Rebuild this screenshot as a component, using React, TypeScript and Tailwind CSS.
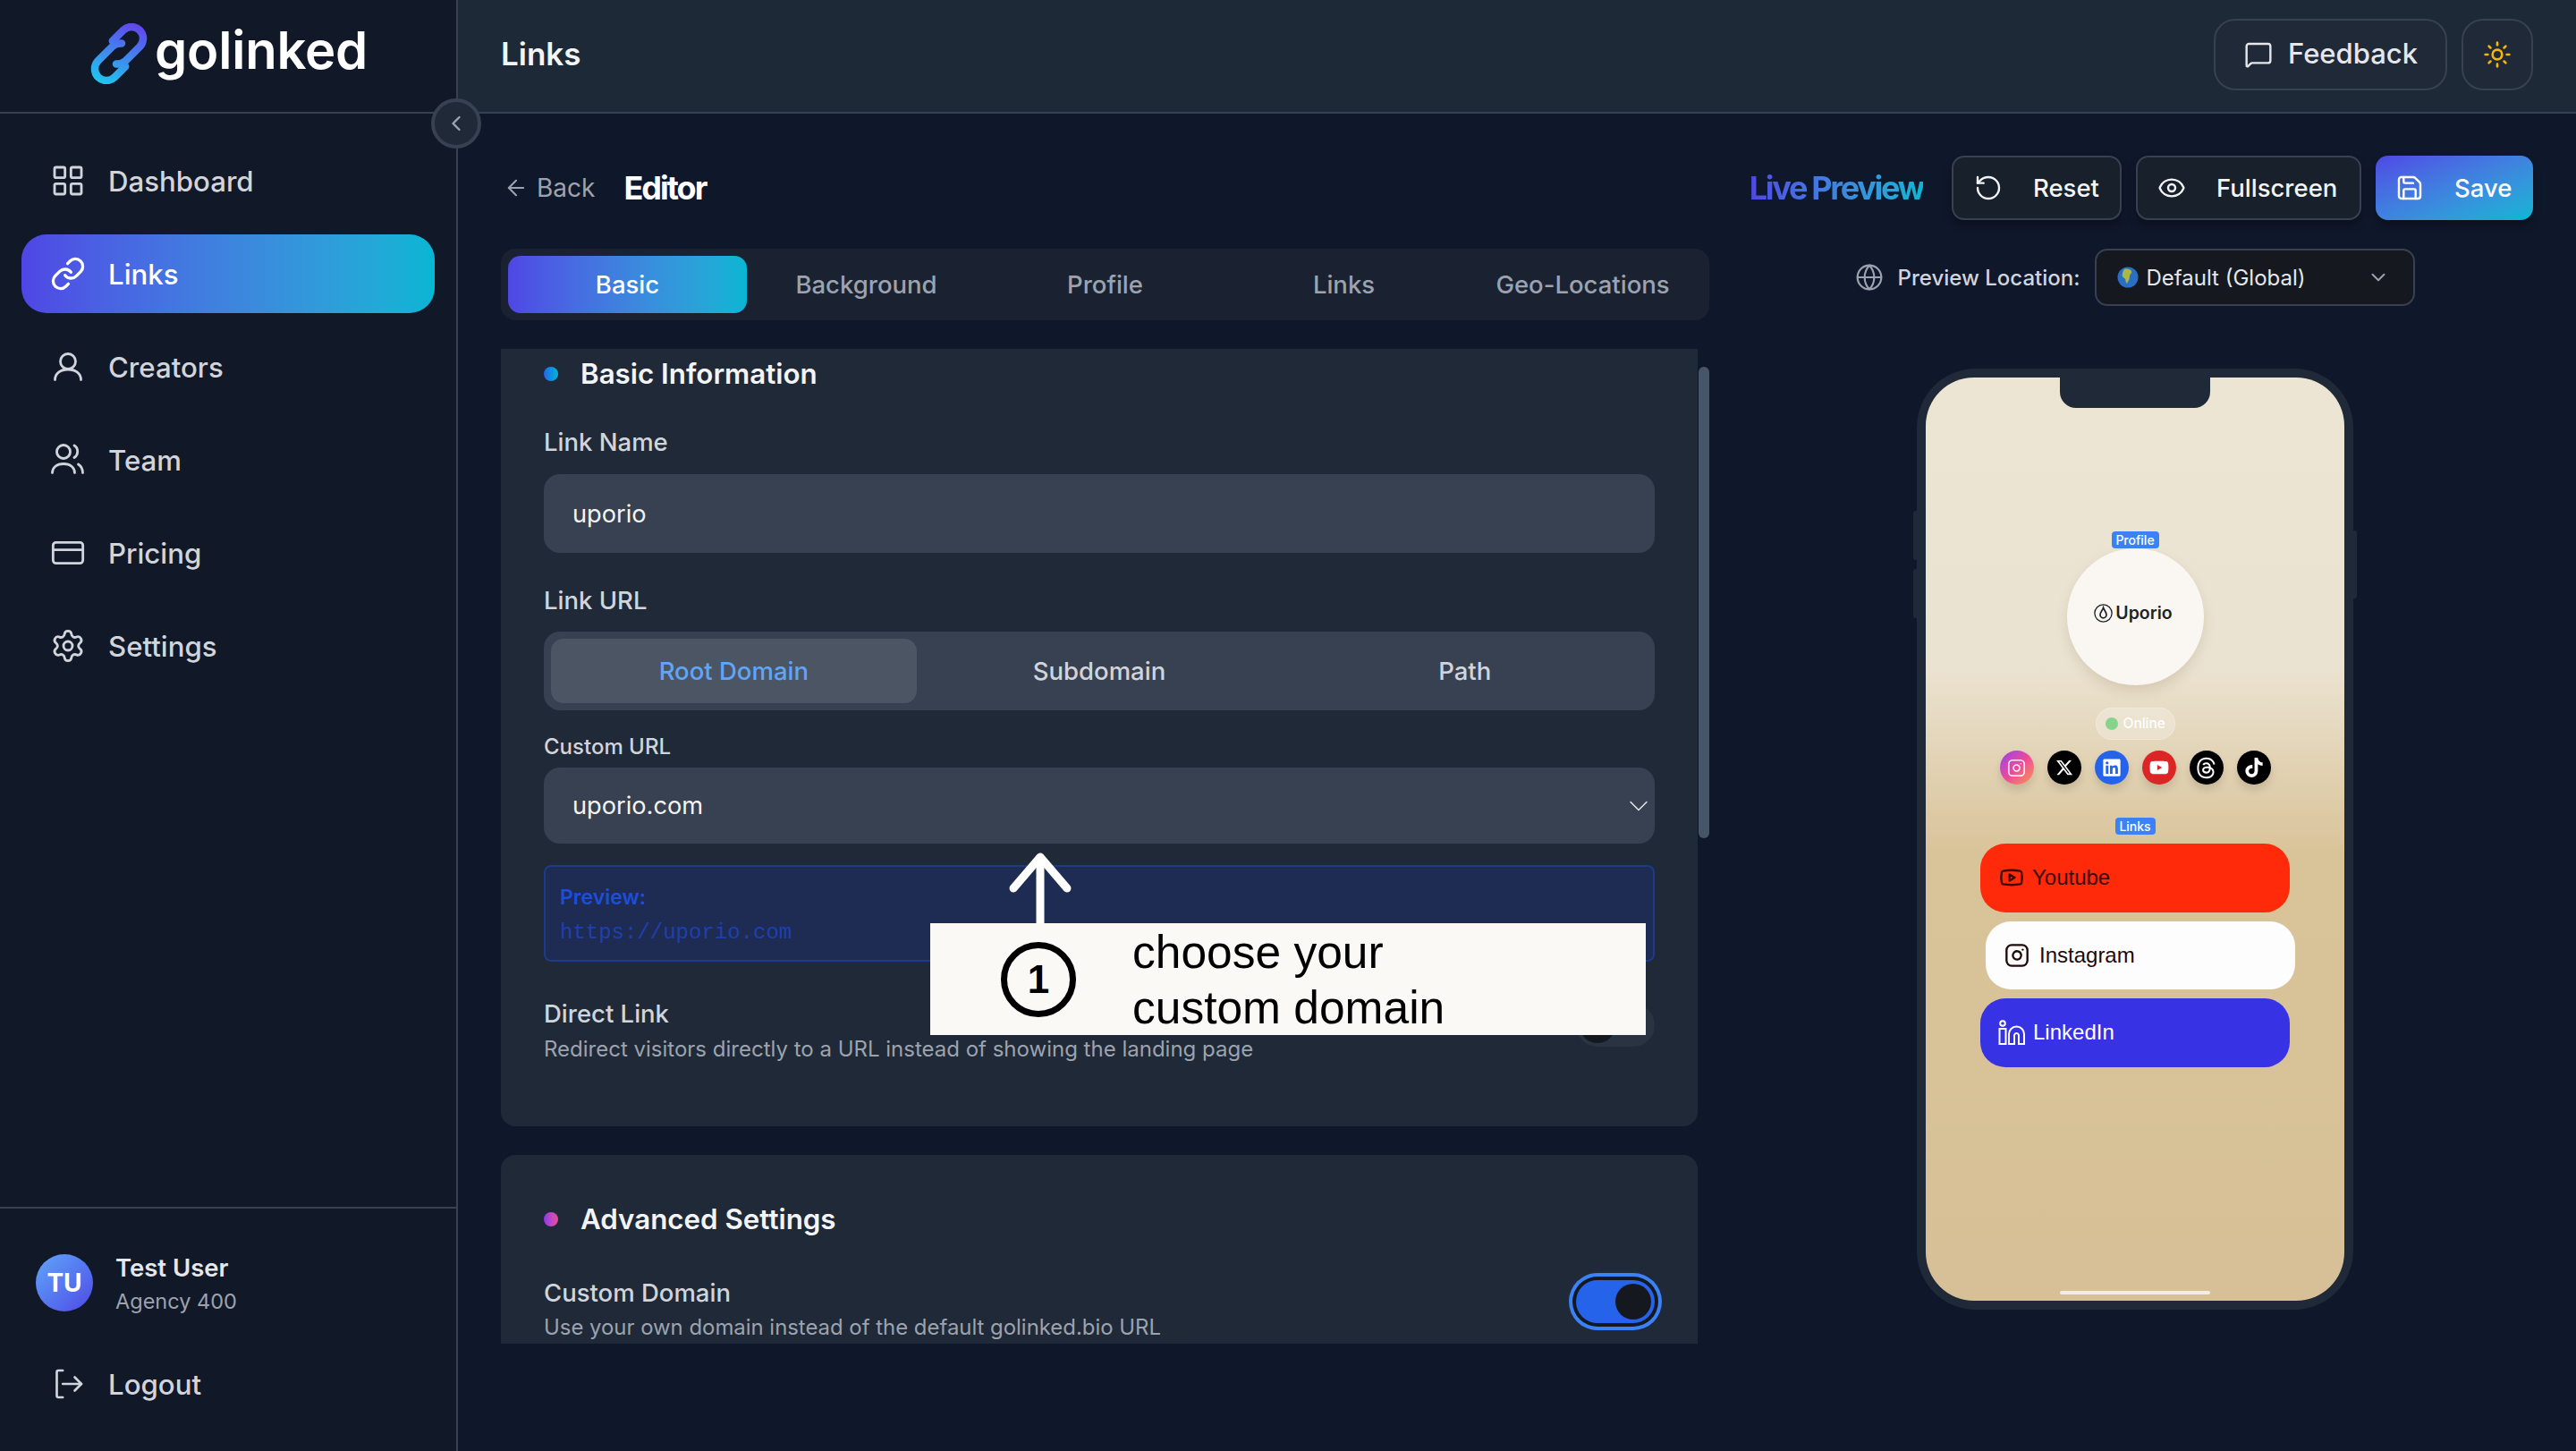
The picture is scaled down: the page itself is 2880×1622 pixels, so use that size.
import React from "react";
import { LayoutGrid, Link as LinkIcon, CreditCard, Settings, ChevronLeft, MessageSquare, Sun, ArrowLeft, RotateCcw, Eye, Save, Globe, ChevronDown, Instagram, Youtube } from "lucide-react";
import { FaXTwitter, FaLinkedin, FaYoutube, FaThreads, FaTiktok } from "react-icons/fa6";

function Logo() {
  return (
    <svg width="64" height="68" viewBox="0 0 64 68" fill="none" strokeWidth="8.5" strokeLinecap="round">
      <defs>
        <linearGradient id="lg" gradientUnits="userSpaceOnUse" x1="44" y1="0" x2="18" y2="68">
          <stop offset="0" stopColor="#6048ee" />
          <stop offset="1" stopColor="#22c4ee" />
        </linearGradient>
      </defs>
      <path stroke="url(#lg)" d="M24.8 19.800 36.800 7.800A13 13 0 0 1 55.200 26.200L39.200 42.200A13 13 0 0 1 29 45.500" />
      <path stroke="url(#lg)" d="M39.200 48.200 27.200 60.200A13 13 0 0 1 8.800 41.800L24.800 25.800A13 13 0 0 1 35 22.500" />
    </svg>
  );
}

function LogoutIcon() {
  return (
    <svg width="40" height="40" viewBox="0 0 24 24" fill="none" stroke="currentColor" strokeWidth="1.6" strokeLinecap="round" strokeLinejoin="round">
      <path d="M8.5 3H5.5a1 1 0 0 0-1 1v16a1 1 0 0 0 1 1h3" />
      <path d="M8.5 12H21" />
      <path d="M16.5 7.5 21 12l-4.5 4.5" />
    </svg>
  );
}

function CreatorIcon() {
  return (
    <svg width="40" height="40" viewBox="0 0 40 40" fill="none" stroke="currentColor" strokeWidth="2.8" strokeLinecap="round">
      <circle cx="20" cy="14" r="8.5" />
      <path d="M5.5 34.5c0-7 6-11.5 14.5-11.5s14.500 4.500 14.500 11.500" />
    </svg>
  );
}

function TeamIcon() {
  return (
    <svg width="40" height="40" viewBox="0 0 40 40" fill="none" stroke="currentColor" strokeWidth="2.8" strokeLinecap="round">
      <circle cx="15" cy="11" r="7.500" />
      <path d="M2.500 34.500c0-6 5-10 12.500-10s12.500 4 12.500 10" />
      <path d="M27 4a8 8 0 0 1 0 13.500" />
      <path d="M31.500 25c3 2 5 5.500 5 9.500" />
    </svg>
  );
}

function NavItem({ icon, label, active }: { icon: React.ReactNode; label: string; active?: boolean }) {
  return (
    <div className={active
      ? "flex h-[88px] items-center gap-[25px] rounded-[28px] bg-linear-to-r from-[#4f46e5] to-[#06b6d4] pl-[32px] text-[31.200px] font-medium text-white"
      : "flex h-[88px] items-center gap-[25px] rounded-[28px] pl-[32px] text-[31.200px] font-medium text-[#d1d5db]"}>
      {icon}
      <span className="pt-[2px]">{label}</span>
    </div>
  );
}

function Sidebar() {
  return (
    <aside className="flex h-full w-[512px] shrink-0 flex-col border-r-2 border-[#374151] bg-[#111827]">
      <div className="flex h-[127px] shrink-0 items-center border-b-2 border-[#374151] pb-[6px] pl-[101px]">
        <Logo />
        <span className="mb-[7px] ml-[8px] text-[58px] font-semibold leading-none tracking-[-0.2px] text-white">golinked</span>
      </div>
      <nav className="flex flex-1 flex-col gap-[16px] px-[24px] pt-[31px]">
        <NavItem icon={<LayoutGrid size={40} strokeWidth={1.7} />} label="Dashboard" />
        <NavItem active icon={<LinkIcon size={40} strokeWidth={2} />} label="Links" />
        <NavItem icon={<CreatorIcon />} label="Creators" />
        <NavItem icon={<TeamIcon />} label="Team" />
        <NavItem icon={<CreditCard size={40} strokeWidth={1.7} />} label="Pricing" />
        <NavItem icon={<Settings size={40} strokeWidth={1.7} />} label="Settings" />
      </nav>
      <div className="border-t-2 border-[#374151] pt-[51px] pb-[31px]">
        <div className="flex h-[64px] items-center gap-[25px] pl-[40px]">
          <div className="flex h-[64px] w-[64px] items-center justify-center rounded-full bg-linear-to-br from-[#60a5fa] to-[#4f46e5] text-[28px] font-bold text-white">TU</div>
          <div className="flex h-[64px] flex-col justify-center pt-[4px]">
            <span className="text-[27.500px] font-semibold leading-[37px] text-[#e5e7eb]">Test User</span>
            <span className="text-[23.500px] leading-[37px] text-[#9ca3af]">Agency 400</span>
          </div>
        </div>
        <div className="mt-[37px] px-[24px]">
          <NavItem icon={<LogoutIcon />} label="Logout" />
        </div>
      </div>
    </aside>
  );
}

function TopBar() {
  return (
    <header className="flex h-[127px] shrink-0 items-center justify-between border-b-2 border-[#374151] bg-[#1e2938] pl-[48px] pr-[48px] pb-[4px]">
      <h1 className="text-[35px] font-semibold text-[#f3f4f6]">Links</h1>
      <div className="flex items-center gap-[16px]">
        <button className="flex h-[80px] w-[261px] items-center gap-[17px] rounded-[24px] border-2 border-[#374151] bg-[#1f2937] pl-[32px] text-[31px] font-medium text-[#e5e7eb]">
          <MessageSquare size={32} strokeWidth={1.8} />
          <span>Feedback</span>
        </button>
        <button className="flex h-[80px] w-[80px] items-center justify-center rounded-[24px] border-2 border-[#374151] bg-[#1f2937] text-[#f5b50a]">
          <Sun size={32} strokeWidth={2} />
        </button>
      </div>
    </header>
  );
}

function Toggle({ on, className }: { on?: boolean; className: string }) {
  return (
    <div className={className}>
      {on ? (
        <div className="flex h-[48px] w-[88px] items-center justify-end rounded-full bg-[#2563eb] pr-[4px] ring-4 ring-[#3b82f6] ring-offset-4 ring-offset-[#15191f]">
          <div className="h-[40px] w-[40px] rounded-full bg-[#15191f]" />
        </div>
      ) : (
        <div className="flex h-[48px] w-[88px] items-center rounded-full bg-[#293341] pl-[4px]">
          <div className="h-[40px] w-[40px] rounded-full bg-[#15191f]" />
        </div>
      )}
    </div>
  );
}

function Editor() {
  const tabs = ["Background", "Profile", "Links", "Geo-Locations"];
  return (
    <div className="flex w-[1351px] shrink-0 flex-col">
      <div className="flex h-[72px] items-center">
        <div className="flex items-center gap-[9px] pl-[3px] text-[#9ca3af]">
          <ArrowLeft size={28} strokeWidth={1.8} />
          <span className="text-[28px]">Back</span>
        </div>
        <h2 className="ml-[32px] text-[36px] font-bold tracking-[-2px] text-white">Editor</h2>
      </div>
      <div className="mt-[32px] flex h-[80px] items-center rounded-[16px] bg-[#1a2232] p-[8px] text-[27.500px] font-medium text-[#9ca3af]">
        <div className="flex h-[64px] flex-1 items-center justify-center rounded-[14px] bg-linear-to-r from-[#4f46e5] to-[#06b6d4] pt-[1px] text-white">Basic</div>
        {tabs.map((t) => (
          <div key={t} className="flex h-[64px] flex-1 items-center justify-center pt-[1px]">{t}</div>
        ))}
      </div>
      <div className="relative mt-[32px] h-[1112px] overflow-hidden pr-[13px]">
        <div className="absolute right-0 top-[20px] h-[527px] w-[12px] rounded-full bg-[#475569]" />
        <section className="h-[869px] rounded-b-[16px] bg-[#1f2937] pl-[48px] pr-[48px] pt-[4px]">
          <div className="flex h-[48px] items-center gap-[25px]">
            <span className="h-[16px] w-[16px] rounded-full bg-linear-to-r from-[#2563eb] to-[#06b6d4]" />
            <h3 className="text-[31.300px] font-semibold text-[#f3f4f6]">Basic Information</h3>
          </div>
          <label className="mt-[32px] block text-[27.500px] font-medium leading-[40px] text-[#d1d5db]">Link Name</label>
          <div className="mt-[16px] flex h-[88px] items-center rounded-[18px] bg-[#374151] pl-[32px] pt-[2px] text-[27.200px] text-[#f3f4f6]">uporio</div>
          <label className="mt-[33px] block text-[27.500px] font-medium leading-[40px] text-[#d1d5db]">Link URL</label>
          <div className="mt-[15px] flex h-[88px] items-center rounded-[18px] bg-[#374151] p-[8px] text-[27.500px] font-medium text-[#d1d5db]">
            <div className="flex h-[72px] flex-1 items-center justify-center rounded-[14px] bg-[#4b5563] pt-[1px] text-[#60a5fa]">Root Domain</div>
            <div className="flex h-[72px] flex-1 items-center justify-center pt-[1px]">Subdomain</div>
            <div className="flex h-[72px] flex-1 items-center justify-center pt-[1px]">Path</div>
          </div>
          <label className="mt-[25px] block text-[24px] font-medium leading-[32px] text-[#d1d5db]">Custom URL</label>
          <div className="mt-[7px] flex h-[85px] items-center justify-between rounded-[18px] bg-[#374151] pl-[32px] text-[27.200px] text-[#f3f4f6]">
            <span className="pt-[2px]">uporio.com</span>
            <ChevronDown size={36} strokeWidth={1} className="text-[#e5e7eb]" />
          </div>
          <div className="mt-[24px] h-[108px] rounded-[8px] border-2 border-[#1e3a8a] bg-[#1e2b53] pl-[16px] pt-[18px]">
            <div className="text-[23px] font-semibold leading-[32px] text-[#1d4ed8]">Preview:</div>
            <div className="mt-[8px] text-[24px] leading-[32px] text-[#1e40af] [font-family:'Liberation_Mono',monospace]">https://uporio.com</div>
          </div>
          <div className="mt-[38px] flex items-start justify-between">
            <div>
              <div className="text-[27.500px] font-medium leading-[40px] text-[#d1d5db]">Direct Link</div>
              <div className="mt-[4px] text-[24px] leading-[32px] text-[#9ca3af]">Redirect visitors directly to a URL instead of showing the landing page</div>
            </div>
            <Toggle className="mt-[9px]" />
          </div>
        </section>
        <section className="mt-[32px] rounded-t-[16px] bg-[#1f2937] pl-[48px] pr-[48px] pt-[48px] pb-[40px]">
          <div className="flex h-[48px] items-center gap-[25px]">
            <span className="h-[16px] w-[16px] rounded-full bg-linear-to-r from-[#9333ea] to-[#ec4899]" />
            <h3 className="text-[31.300px] font-semibold text-[#f3f4f6]">Advanced Settings</h3>
          </div>
          <div className="mt-[38px] flex items-start justify-between">
            <div>
              <div className="text-[27.500px] font-medium leading-[40px] text-[#d1d5db]">Custom Domain</div>
              <div className="mt-[3px] text-[23.900px] leading-[32px] text-[#9ca3af]">Use your own domain instead of the default golinked.bio URL</div>
            </div>
            <Toggle on className="mt-[6px]" />
          </div>
        </section>
      </div>
    </div>
  );
}

function SocialDot({ className, children }: { className: string; children: React.ReactNode }) {
  return <div className={"flex h-[38px] w-[38px] items-center justify-center rounded-full text-white shadow-[0_6px_10px_rgba(0,0,0,0.12)] " + className}>{children}</div>;
}

function Badge({ children, className }: { children: React.ReactNode; className: string }) {
  return <div className={"flex h-[19px] items-center justify-center rounded-[4px] bg-[#3b82f6] text-[14px] font-medium text-white " + className}>{children}</div>;
}

function Phone() {
  return (
    <div className="relative mt-[70px] h-[1052px] w-[488px] rounded-[66px] bg-[#1f2937] p-[10px]">
      <div className="absolute left-[-4px] top-[159px] h-[55px] w-[4px] rounded-l-[3px] bg-[#1f2937]" />
      <div className="absolute left-[-4px] top-[224px] h-[55px] w-[4px] rounded-l-[3px] bg-[#1f2937]" />
      <div className="absolute right-[-4px] top-[181px] h-[76px] w-[4px] rounded-r-[3px] bg-[#1f2937]" />
      <div className="relative flex h-full w-full flex-col items-center overflow-hidden rounded-[54px] bg-[linear-gradient(180deg,#ede5d4_0%,#ebe3d2_31%,#d9c398_52%,#d7c097_100%)] pt-[172px] [font-family:'Liberation_Sans',Arial,sans-serif]">
        <div className="absolute left-[150px] top-0 h-[34px] w-[168px] rounded-b-[18px] bg-[#1f2937]" />
        <Badge className="w-[53px] [font-family:Inter,sans-serif]">Profile</Badge>
        <div className="flex h-[153px] w-[153px] items-center justify-center gap-[3px] rounded-full bg-[#faf7f2] pb-[8px] pr-[4px] shadow-[0_6px_14px_rgba(120,100,60,0.18)]">
          <svg width="21" height="21" viewBox="0 0 24 24" fill="none" stroke="#1f2428" strokeWidth="1.500">
            <circle cx="12" cy="12" r="11" />
            <path strokeWidth="2" d="M12 5c1 3 4 5 4 9a4 4 0 0 1-8 0c0-4 3-5 4-9z" />
          </svg>
          <span className="text-[19.500px] font-semibold leading-none text-[#1f2428] [font-family:Inter,sans-serif]">Uporio</span>
        </div>
        <div className="mt-[25px] flex h-[36px] w-[89px] items-center gap-[6px] rounded-full border border-white/20 bg-white/25 pl-[10px] text-[15.500px] font-medium text-white [font-family:Inter,sans-serif]">
          <span className="h-[14px] w-[14px] rounded-full bg-[#86d48b]" />
          <span>Online</span>
        </div>
        <div className="mt-[12px] flex gap-[15px]">
          <SocialDot className="bg-linear-to-br from-[#9333ea] via-[#ec4899] to-[#fb923c]"><Instagram size={21} strokeWidth={1.800} /></SocialDot>
          <SocialDot className="bg-black"><FaXTwitter size={20} /></SocialDot>
          <SocialDot className="bg-[#2563eb]"><FaLinkedin size={22} /></SocialDot>
          <SocialDot className="bg-[#dc2626]"><FaYoutube size={22} /></SocialDot>
          <SocialDot className="bg-black"><FaThreads size={25} /></SocialDot>
          <SocialDot className="bg-black"><FaTiktok size={22} /></SocialDot>
        </div>
        <Badge className="mt-[37px] w-[45px] [font-family:Inter,sans-serif]">Links</Badge>
        <div className="mt-[10px] flex flex-col gap-[10px]">
          <div className="flex h-[76.500px] w-[346px] items-center gap-[9px] rounded-[28px] bg-[#ff2a0a] pl-[21px] text-[24px] text-[#3a0800]">
            <Youtube size={28} strokeWidth={2} />
            <span>Youtube</span>
          </div>
          <div className="flex h-[76.500px] w-[346px] translate-x-[6px] items-center gap-[11px] rounded-[28px] bg-[#fdfdfd] pl-[21px] text-[24px] text-[#200808]">
            <Instagram size={28} strokeWidth={2} />
            <span>Instagram</span>
          </div>
          <div className="flex h-[76.500px] w-[346px] items-center gap-[9px] rounded-[28px] bg-[#3733e5] pl-[20px] text-[24px] text-white">
            <svg width="30" height="28" viewBox="0 0 30 28" fill="none" stroke="currentColor" strokeWidth="2">
              <circle cx="5" cy="4" r="2.800" />
              <rect x="1.500" y="10" width="7" height="17" />
              <path d="M12 27V16a8.500 8.500 0 0 1 17 0v11h-6V17a2.600 2.600 0 0 0-5 0v10z" />
            </svg>
            <span>LinkedIn</span>
          </div>
        </div>
        <div className="absolute bottom-[7px] left-[150px] h-[4px] w-[168px] rounded-full bg-white/70" />
      </div>
    </div>
  );
}

function PreviewColumn() {
  return (
    <div className="ml-[31px] flex flex-1 flex-col items-center">
      <div className="flex h-[72px] w-full items-center justify-end gap-[16px] text-[27.500px] font-medium text-[#f3f4f6]">
        <span className="mr-[16px] bg-linear-to-r from-[#4f46e5] to-[#06b6d4] bg-clip-text text-[36px] font-bold tracking-[-2.300px] text-transparent">Live Preview</span>
        <button className="flex h-[72px] w-[190px] items-center gap-[34px] rounded-[14px] border-2 border-[#374151] bg-[#18212b] pl-[23px] shadow-[0_6px_10px_rgba(0,0,0,0.3)]">
          <RotateCcw size={32} strokeWidth={1.800} /><span className="pt-[1px]">Reset</span>
        </button>
        <button className="flex h-[72px] w-[252px] items-center gap-[34px] rounded-[14px] border-2 border-[#374151] bg-[#18212b] pl-[22px] shadow-[0_6px_10px_rgba(0,0,0,0.3)]">
          <Eye size={32} strokeWidth={1.800} /><span className="pt-[1px]">Fullscreen</span>
        </button>
        <button className="flex h-[72px] w-[176px] items-center gap-[34px] rounded-[14px] bg-linear-to-br from-[#4f46e5] to-[#06b6d4] pl-[22px] text-white shadow-[0_6px_10px_rgba(0,0,0,0.3)]">
          <Save size={32} strokeWidth={1.800} /><span className="pt-[1px]">Save</span>
        </button>
      </div>
      <div className="mt-[32px] flex h-[64px] items-center">
        <Globe size={32} strokeWidth={1.600} className="text-[#9ca3af]" />
        <span className="ml-[16px] pt-[1px] text-[24px] font-medium text-[#d1d5db]">Preview Location:</span>
        <div className="ml-[17px] flex h-[64px] w-[358px] items-center justify-between rounded-[14px] border-2 border-[#374151] bg-[#15191f] pl-[23px] pr-[26px] text-[24px] text-[#e5e7eb]">
          <span className="flex items-center gap-[8px]">
            <svg width="24" height="24" viewBox="0 0 24 24">
              <circle cx="12" cy="12" r="11.500" fill="#2a6fc4" />
              <path fill="#a8b84a" d="M8 3c3-1 7 0 8 2 1 3-2 3-2 6 0 3-2 6-3 8-2-2-1-5-3-6-2-1-3-3-2-5 0-2 1-4 2-5z" />
            </svg>
            <span className="pt-[1px]">Default (Global)</span>
          </span>
          <ChevronDown size={26} strokeWidth={1.800} className="text-[#9ca3af]" />
        </div>
      </div>
      <Phone />
    </div>
  );
}

function Annotation() {
  return (
    <>
      <svg className="absolute left-[1125px] top-[950px]" width="76" height="86" viewBox="0 0 76 86" fill="none" stroke="#ffffff" strokeWidth="9" strokeLinecap="round" strokeLinejoin="round">
        <path d="M38 9v74" />
        <path d="M8 43 38 8l30 35" />
      </svg>
      <div className="absolute left-[1040px] top-[1032px] flex h-[125px] w-[800px] items-center bg-[#faf9f5] text-black [font-family:'Liberation_Sans',Arial,sans-serif]">
        <div className="ml-[79px] flex h-[84px] w-[84px] items-center justify-center rounded-full border-[7px] border-black text-[44px] font-bold">1</div>
        <div className="ml-[63px] text-[51.500px] leading-[62px]">choose your<br />custom domain</div>
      </div>
    </>
  );
}

export default function App() {
  return (
    <div className="relative flex h-[1622px] w-[2880px] overflow-hidden bg-[#0f172a] [font-family:Inter,sans-serif]">
      <Sidebar />
      <div className="absolute left-[482px] top-[110px] z-10 flex h-[56px] w-[56px] items-center justify-center rounded-full border-4 border-[#374151] bg-[#1f2937] text-[#9ca3af]">
        <ChevronLeft size={28} strokeWidth={2} />
      </div>
      <main className="flex min-w-0 flex-1 flex-col">
        <TopBar />
        <div className="flex flex-1 pl-[48px] pr-[48px] pt-[47px]">
          <Editor />
          <PreviewColumn />
        </div>
      </main>
      <Annotation />
    </div>
  );
}
